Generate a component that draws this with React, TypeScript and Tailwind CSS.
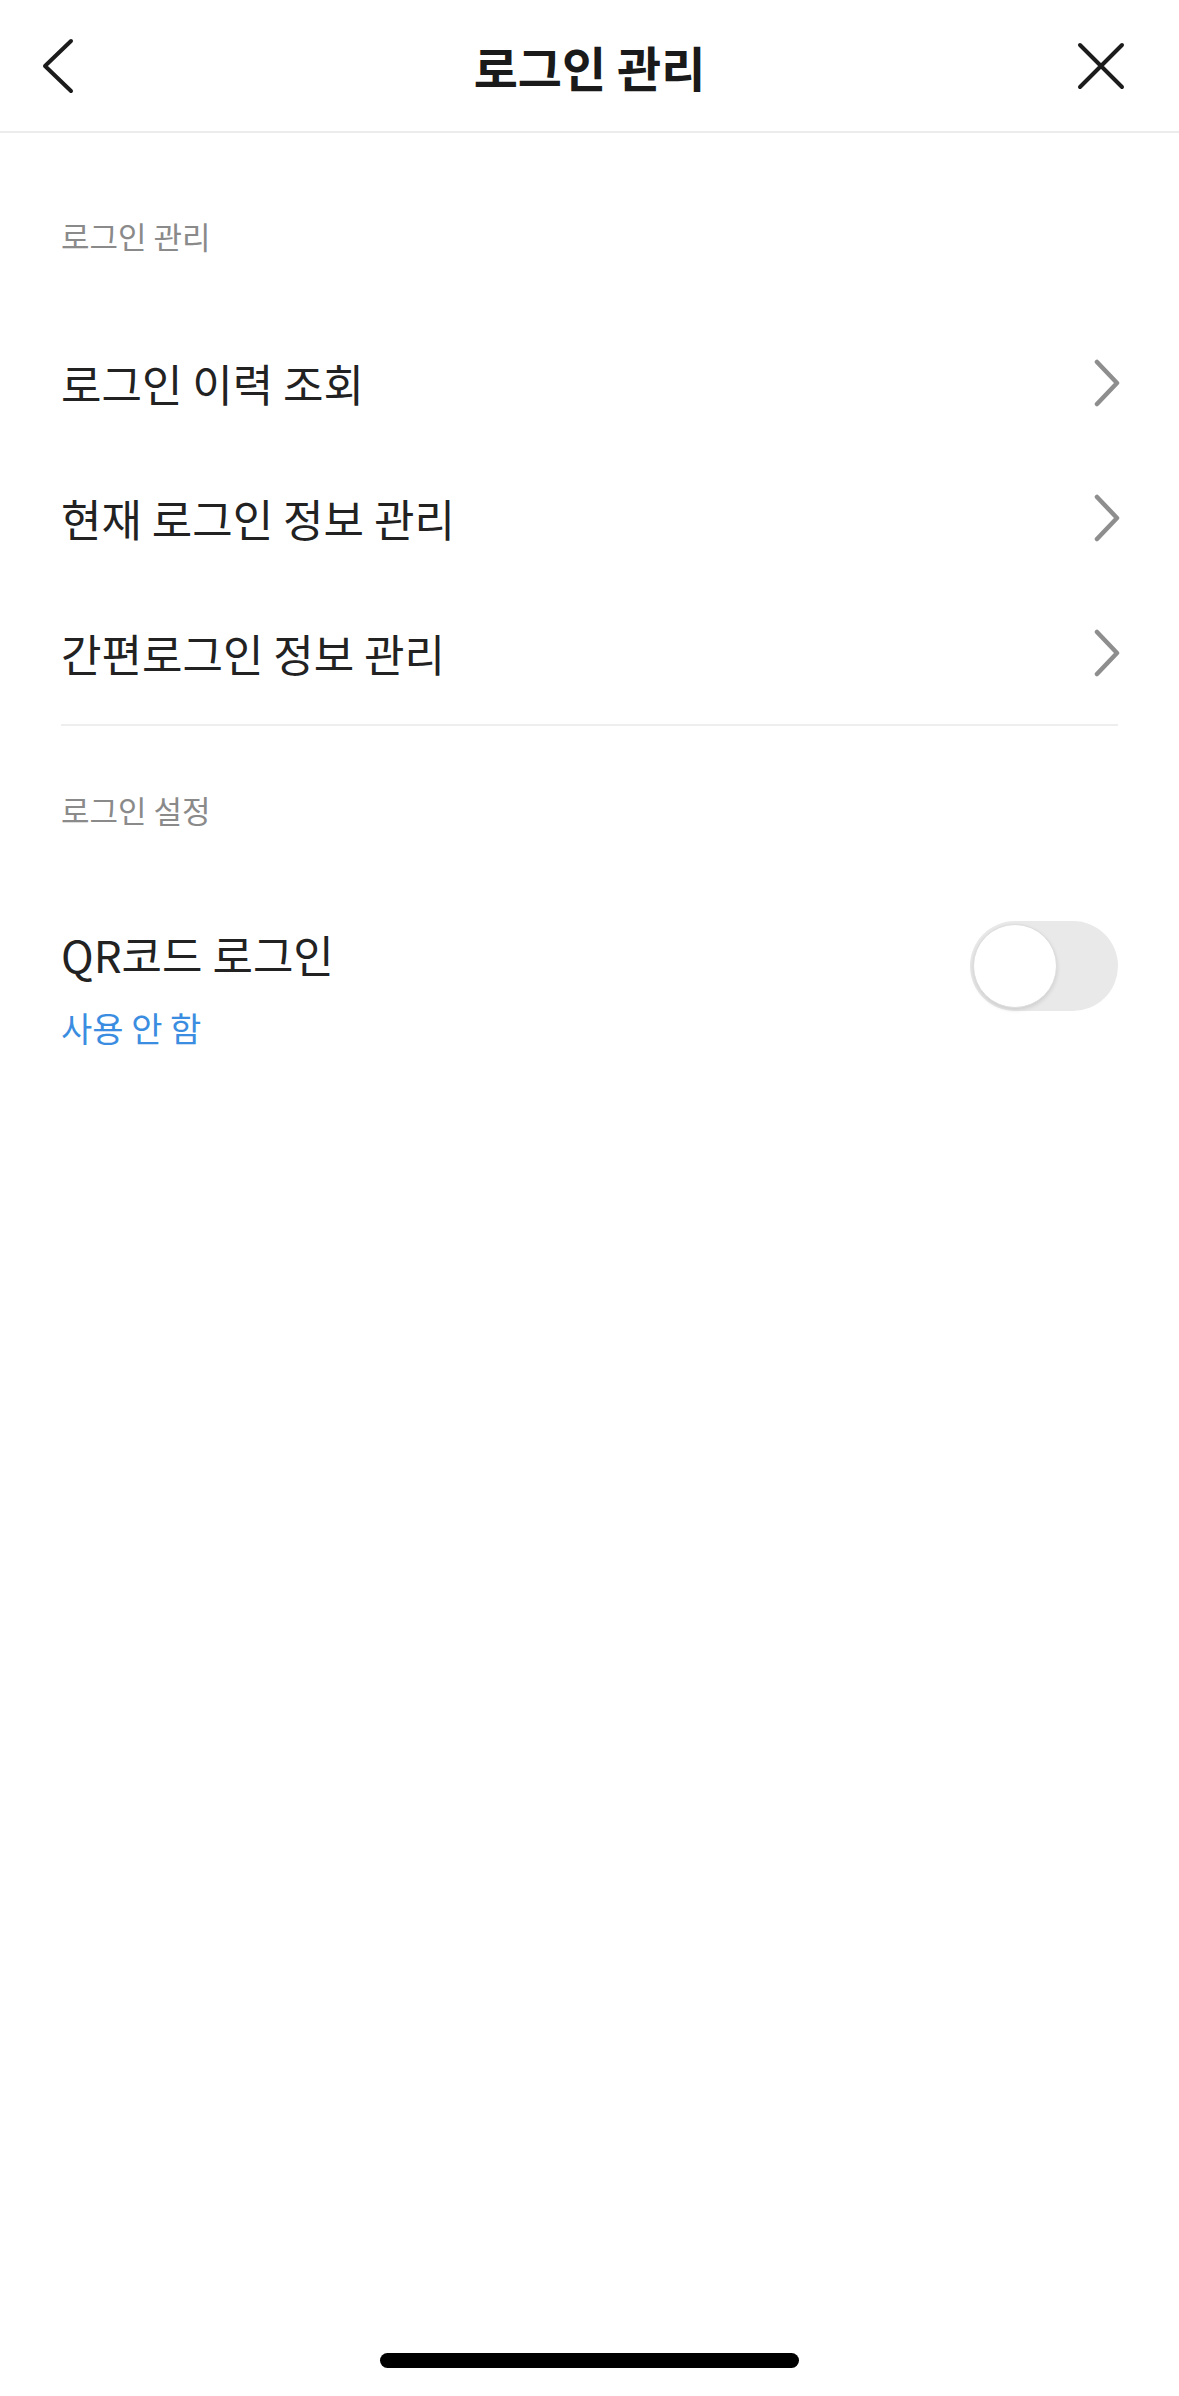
import { useState } from "react";

const FONT = { fontFamily: '"Noto Sans CJK KR", "Noto Sans", sans-serif' };

function ChevronRight() {
  return (
    <svg width="28" height="48" viewBox="0 0 28 48" fill="none" className="-mr-[3px] shrink-0">
      <polyline points="4,3 24,24 4,45" stroke="#8e8e8e" strokeWidth="4.5" strokeLinecap="round" strokeLinejoin="round" />
    </svg>
  );
}

function MenuRow({ label }: { label: string }) {
  return (
    <button className="flex h-[135px] w-full items-center justify-between text-left">
      <span className="text-[44px] leading-[56px] text-[#222222]">{label}</span>
      <ChevronRight />
    </button>
  );
}

export default function App() {
  const [qrOn, setQrOn] = useState(false);

  return (
    <div className="flex min-h-[2396px] w-full flex-col bg-white" style={FONT}>
      {/* Header */}
      <header className="grid h-[133px] grid-cols-[1fr_auto_1fr] items-center border-b-2 border-[#ececec]">
        <div className="flex pl-[41px]">
          <svg width="34" height="56" viewBox="0 0 34 56" fill="none">
            <polyline points="30,3 4,28 30,53" stroke="#1c1c1c" strokeWidth="4" strokeLinecap="round" strokeLinejoin="round" />
          </svg>
        </div>
        <h1 className="text-[48px] font-bold leading-[60px] text-[#1a1a1a]">로그인 관리</h1>
        <div className="flex justify-end pr-[53px]">
          <svg width="50" height="50" viewBox="0 0 50 50" fill="none">
            <path d="M4 4L46 46M46 4L4 46" stroke="#1c1c1c" strokeWidth="4" strokeLinecap="round" />
          </svg>
        </div>
      </header>

      <main className="px-[61px]">
        {/* 로그인 관리 */}
        <section className="pt-[82px]">
          <p className="text-[31px] leading-[42px] text-[#8a8a8a]">로그인 관리</p>
          <div className="mt-[58px]">
            <MenuRow label="로그인 이력 조회" />
            <MenuRow label="현재 로그인 정보 관리" />
            <MenuRow label="간편로그인 정보 관리" />
          </div>
          <div className="mt-[4px] h-[2px] w-full bg-[#eeeeee]" />
        </section>

        {/* 로그인 설정 */}
        <section className="pt-[63px]">
          <p className="text-[31px] leading-[42px] text-[#8a8a8a]">로그인 설정</p>
          <div className="mt-[90px] flex items-start justify-between">
            <div className="flex flex-col pt-[5px]">
              <span className="text-[44px] leading-[56px] text-[#222222]">QR코드 로그인</span>
              <span className="mt-[25px] text-[34px] leading-[42px] text-[#3a8de0]">
                {qrOn ? "사용 함" : "사용 안 함"}
              </span>
            </div>
            <button
              onClick={() => setQrOn(!qrOn)}
              className={`flex h-[90px] w-[148px] items-center rounded-full p-[3px] ${qrOn ? "justify-end bg-[#3a8de0]" : "justify-start bg-[#e9e9e9]"}`}
            >
              <span className="block h-[84px] w-[84px] rounded-full border border-[#dddddd] bg-white shadow-[0_2px_4px_rgba(0,0,0,0.12)]" />
            </button>
          </div>
        </section>
      </main>

      {/* Home indicator */}
      <div className="mt-auto flex justify-center pb-[28px]">
        <div className="h-[15px] w-[419px] rounded-full bg-black" />
      </div>
    </div>
  );
}
